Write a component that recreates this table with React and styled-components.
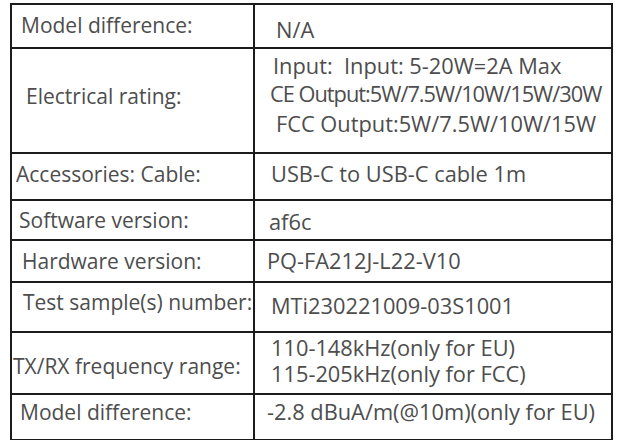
import React from 'react';
import styled, { createGlobalStyle } from 'styled-components';

const GlobalStyle = createGlobalStyle`
  html, body {
    margin: 0;
    padding: 0;
    background: #ffffff;
  }
  body {
    font-family: 'Open Sans', 'Noto Sans', sans-serif;
  }
`;

// ly / ry = vertical nudge of the text from the row centre
const rows = [
  { label: 'Model difference:', lx: 9, ly: -1.5, h: 44, rx: 21, ry: 4, value: ['N/A'] },
  {
    label: 'Electrical rating:',
    lx: 14,
    ly: -4.5,
    h: 105,
    rx: 15,
    top: 3,
    value: ['Input:  Input: 5-20W=2A Max', 'CE Output:5W/7.5W/10W/15W/30W', 'FCC Output:5W/7.5W/10W/15W'],
    offsets: [3, 0, 6],
    gaps: [0, 0, 2],
    lh: 28,
  },
  { label: 'Accessories: Cable:', lx: 4, ly: -3, h: 47, rx: 16, ry: -3, value: ['USB-C to USB-C cable 1m'] },
  { label: 'Software version:', lx: 7, ly: 0, h: 40, rx: 14, ry: 1.5, value: ['af6c'] },
  { label: 'Hardware version:', lx: 10, ly: 0, h: 42, rx: 12, ry: 0, value: ['PQ-FA212J-L22-V10'] },
  { label: 'Test sample(s) number:', lx: 11, ly: -5.5, h: 50, rx: 16, ry: -1.5, value: ['MTi230221009-03S1001'] },
  {
    label: 'TX/RX frequency range:',
    lx: 1,
    ly: 3,
    h: 62,
    rx: 16,
    ry: -2,
    value: ['110-148kHz(only for EU)', '115-205kHz(only for FCC)'],
    lh: 26,
  },
  { label: 'Model difference:', lx: 8, ly: -5.5, h: 46, rx: 12, ry: -5.5, value: ['-2.8 dBuA/m(@10m)(only for EU)'] },
];

const nudge = (dy) =>
  dy >= 0 ? `padding-top: ${dy * 2}px;` : `padding-bottom: ${-dy * 2}px;`;

const Page = styled.div`
  padding: 3px 6px 0 10px;
`;

const Table = styled.div`
  border: 2px solid #1c1c1c;
  width: 603px;
  box-sizing: border-box;
`;

const Row = styled.div`
  display: grid;
  grid-template-columns: 243px 1fr;
  height: ${(props) => props.h}px;
  box-sizing: border-box;
  border-top: ${(props) => (props.first ? 'none' : '2px solid #1c1c1c')};
`;

const Label = styled.div`
  display: flex;
  align-items: center;
  box-sizing: border-box;
  padding-left: ${(props) => props.px}px;
  ${(props) => nudge(props.dy)}
  border-right: 2px solid #1c1c1c;
  color: #4d4d4d;
  font-size: 21px;
  line-height: 28px;
  white-space: pre;
  overflow: hidden;
`;

const Value = styled.div`
  display: flex;
  flex-direction: column;
  justify-content: ${(props) => (props.top !== undefined ? 'flex-start' : 'center')};
  box-sizing: border-box;
  padding-left: ${(props) => props.px}px;
  ${(props) => (props.top !== undefined ? `padding-top: ${props.top}px;` : nudge(props.dy))}
  color: #4d4d4d;
  font-size: 21.8px;
  line-height: ${(props) => props.lh || 28}px;
  white-space: pre;
  overflow: hidden;
`;

const Line = styled.span`
  padding-left: ${(props) => props.indent || 0}px;
  margin-top: ${(props) => props.gap || 0}px;
  letter-spacing: ${(props) => (props.tight ? '-1px' : 'normal')};
`;

const App = () => {
  return (
    <>
      <GlobalStyle />
      <Page>
        <Table>
          {rows.map((row, i) => (
            <Row key={i} h={i === 0 ? row.h - 2 : row.h} first={i === 0}>
              <Label px={row.lx} dy={row.ly}>
                {row.label}
              </Label>
              <Value px={row.rx} dy={row.ry} top={row.top} lh={row.lh}>
                {row.value.map((line, j) => (
                  <Line
                    key={j}
                    indent={row.offsets ? row.offsets[j] : 0}
                    gap={row.gaps ? row.gaps[j] : 0}
                    tight={line.startsWith('CE')}
                  >
                    {line}
                  </Line>
                ))}
              </Value>
            </Row>
          ))}
        </Table>
      </Page>
    </>
  );
};

export default App;
